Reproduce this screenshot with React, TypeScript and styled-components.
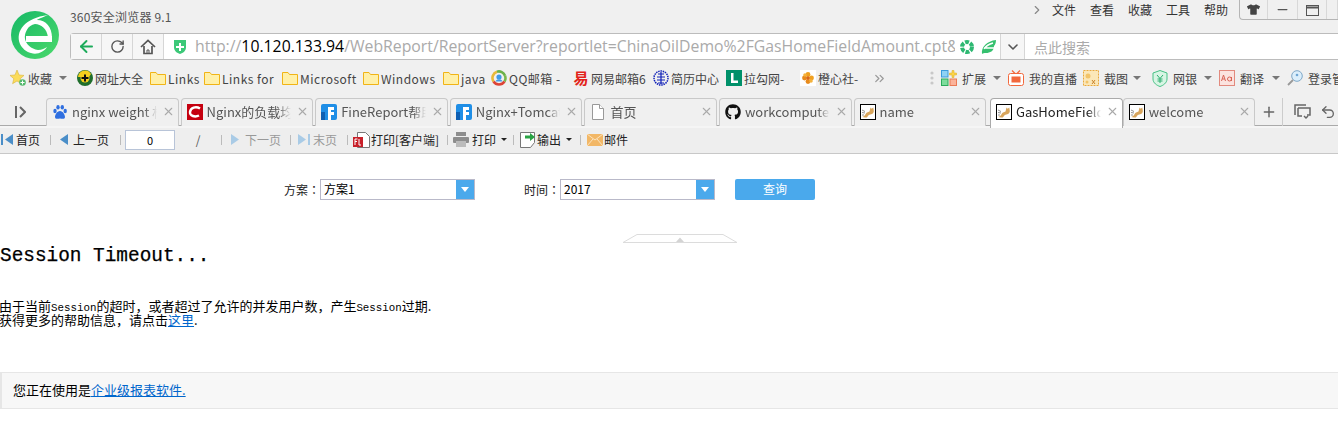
import React from "react"
import styled, { createGlobalStyle } from "styled-components"
import { ArrowLeft, RotateCw, ChevronDown, ChevronRight, ChevronsRight, Plus, X, Undo2, Minus } from "lucide-react"
import { FaGithub, FaTshirt } from "react-icons/fa"

const CJK = `"Noto Sans CJK SC", "Noto Sans", sans-serif`

const GlobalStyle = createGlobalStyle`
  html, body {
    margin: 0;
    padding: 0;
    background: #fff;
    overflow: hidden;
  }
  * { box-sizing: border-box; }
`

/* ---------- small drawn icons ---------- */

const Logo = () => (
  <svg width="48" height="48" viewBox="0 0 48 48">
    <defs>
      <linearGradient id="lg" x1="0" y1="0" x2="1" y2="1">
        <stop offset="0" stopColor="#16b866" />
        <stop offset="1" stopColor="#4cd96c" />
      </linearGradient>
    </defs>
    <circle cx="24" cy="24" r="24" fill="url(#lg)" />
    <path
      d="M9 33C4 20 14 7 37 4C30 7 27 8 26 9C35 9 41 16 41 27L37 26C36 18 30 13 24 13C17 14 13 22 14 28C15 33 20 38 27 39C31 39 34 37 36 36C33 41 26 44 20 42C15 41 11 37 9 33Z"
      fill="#fff"
    />
    <rect x="15" y="25" width="26" height="6" fill="#fff" />
  </svg>
)

const Shield = ({ color = "#3cc878" }: { color?: string }) => (
  <svg width="14" height="16" viewBox="0 0 14 16">
    <path d="M1 1h12v7c0 4-3 6-6 7-3-1-6-3-6-7z" fill={color} />
    <path d="M6 4h2v3h3v2H8v3H6V9H3V7h3z" fill="#fff" />
  </svg>
)

const Home = () => (
  <svg width="16" height="16" viewBox="0 0 16 16" fill="none" stroke="#555" strokeWidth="1.7">
    <path d="M1 8l7-6.5L15 8" />
    <path d="M4 7v7.500h8V7" />
    <path d="M7 15v-4h2v4" strokeWidth="1" />
  </svg>
)

const Ring = () => (
  <svg width="14" height="14" viewBox="0 0 14 14" fill="none" stroke="#2eb872" strokeWidth="4" strokeDasharray="4 1.240">
    <circle cx="7" cy="7" r="5" />
  </svg>
)

const Leaf = () => (
  <svg width="15" height="14" viewBox="0 0 15 14">
    <path d="M1 14C0 7 6 1 15 0c0 3-1 5-2 6 0 5-4 7-8 7-2 0-3 0-4 1z" fill="#36c06f" />
    <path d="M3 9c2-3 5-5 9-6M3 8h10" stroke="#fff" strokeWidth="1.300" fill="none" />
  </svg>
)

const Star = () => (
  <svg width="16" height="16" viewBox="0 0 16 16">
    <path d="M7 0l2 5 5 .4-3.800 3.300 1.200 5L7 11l-4.400 2.700 1.200-5L0 5.400 5 5z" fill="#fbdc5a" stroke="#d9b43c" strokeWidth=".6" />
    <circle cx="12.500" cy="12.500" r="3.300" fill="#55b96e" />
    <path d="M12 10.500h1v1.500h1.500v1H13v1.500h-1V13h-1.500v-1H12z" fill="#fff" />
  </svg>
)

const Nav = () => (
  <svg width="16" height="16" viewBox="0 0 16 16">
    <circle cx="8" cy="8" r="8" fill="#1f6e2c" />
    <path d="M1 7a7 7 0 0 1 13-3l-2 3z" fill="#f5cf1e" />
    <circle cx="8" cy="8" r="4.500" fill="#f5cf1e" />
    <path d="M7 4.500h2V7h2.500v2H9v2.500H7V9H4.500V7H7z" fill="#111" />
  </svg>
)

const Folder = () => (
  <svg width="16" height="14" viewBox="0 0 16 14">
    <path d="M.5 1.500h5.500l1.500 2h8v10H.5z" fill="#fff0a8" stroke="#f1b416" />
  </svg>
)

const QQMail = () => (
  <svg width="16" height="16" viewBox="0 0 16 16" fill="none" strokeWidth="2.600">
    <path d="M2.500 11.500A6.600 6.600 0 0 1 6 1.700" stroke="#e8b93a" />
    <path d="M6 1.700a6.600 6.600 0 0 1 8 4" stroke="#6cb24a" />
    <path d="M14 5.700a6.600 6.600 0 0 1-.5 5.800" stroke="#78b84c" />
    <path d="M13.500 11.500a6.600 6.600 0 0 1-11 0" stroke="#dc4436" />
    <circle cx="8" cy="7" r="2.600" fill="#3d9be9" stroke="none" />
    <path d="M4.500 11.500c1-3 6-3 7 0z" fill="#3d9be9" stroke="none" />
  </svg>
)

const Netease = () => <NeteaseMark>易</NeteaseMark>

const Resume = () => (
  <svg width="16" height="16" viewBox="0 0 16 16" fill="none" stroke="#1020b8">
    <circle cx="8" cy="8" r="7" strokeWidth="1.500" strokeDasharray="1.500 .8" />
    <path d="M5 4h6M4 7h8M4 10h8M5 13h6M8 2v12" strokeWidth="1.200" />
  </svg>
)

const Lagou = () => (
  <svg width="16" height="16" viewBox="0 0 16 16">
    <rect width="16" height="16" fill="#00916a" />
    <path d="M5 3h2.500v7.500H12V13H5z" fill="#fff" />
  </svg>
)

const Flower = () => (
  <svg width="16" height="16" viewBox="0 0 16 16">
    <rect width="16" height="16" fill="#fff" />
    <circle cx="8" cy="4.500" r="2.400" fill="#f0a020" />
    <circle cx="4.500" cy="8" r="2.400" fill="#e88a1c" />
    <circle cx="11.500" cy="8" r="2.400" fill="#f0a020" />
    <circle cx="8" cy="11.500" r="2.400" fill="#e88a1c" />
    <circle cx="5" cy="5" r="1.800" fill="#f4b23c" />
    <circle cx="11" cy="11" r="1.800" fill="#f4b23c" />
    <circle cx="8" cy="8" r="1.800" fill="#d9661a" />
  </svg>
)

const Grip = () => (
  <svg width="4" height="14" viewBox="0 0 4 14" fill="#c8c8c8">
    <circle cx="2" cy="2" r="1.600" />
    <circle cx="2" cy="7" r="1.600" />
    <circle cx="2" cy="12" r="1.600" />
  </svg>
)

const Extend = () => (
  <svg width="16" height="16" viewBox="0 0 16 16">
    <rect x=".5" y=".5" width="6.500" height="6.500" fill="#8fd2f5" stroke="#3a9bdc" />
    <rect x=".5" y="9" width="6.500" height="6.500" fill="#7edc9c" stroke="#2cab5c" />
    <rect x="9" y="9" width="6.500" height="6.500" fill="#fbb39a" stroke="#ea7a55" />
    <path d="M11 .5h2V3h2.500v2H13v2.500h-2V5H8.500V3H11z" fill="#fbd34b" stroke="#dba81c" strokeWidth=".5" />
  </svg>
)

const Tv = () => (
  <svg width="16" height="16" viewBox="0 0 16 16">
    <path d="M4 .5l3 3M12 .5l-3 3" stroke="#f2683c" strokeWidth="1.200" />
    <rect x=".5" y="3.500" width="15" height="12" rx="2" fill="#fff" stroke="#f2683c" />
    <rect x="3.500" y="6.500" width="9" height="6" fill="#f2683c" />
  </svg>
)

const Shot = () => (
  <svg width="16" height="16" viewBox="0 0 16 16">
    <rect x=".5" y=".5" width="15" height="15" fill="#fbe7b8" stroke="#eaa93a" strokeDasharray="2 1" />
    <circle cx="5" cy="6" r="2.500" fill="#f2c46a" />
    <path d="M9 10l3 4M12 10l-3 4" stroke="#c9822a" />
    <circle cx="4" cy="12" r="1.500" fill="#f2c46a" />
  </svg>
)

const Bank = () => (
  <svg width="16" height="17" viewBox="0 0 16 17">
    <path d="M8 .5l7 2.500v6c0 4-4 6.500-7 7.500-3-1-7-3.500-7-7.500V3z" fill="#d8f5e4" stroke="#46c184" />
    <path d="M5 5l3 3.500L11 5M8 8.500V13M5.500 9h5M5.500 11h5" stroke="#2eaf70" fill="none" />
  </svg>
)

const Translate = () => (
  <svg width="16" height="16" viewBox="0 0 16 16">
    <rect x=".5" y=".5" width="15" height="15" fill="#fbe3df" stroke="#e28a7e" />
    <path d="M2.500 11l2-6 2 6M3.300 9h2.500" stroke="#d86456" fill="none" />
    <circle cx="10.500" cy="9" r="2" stroke="#d86456" fill="none" />
    <path d="M12.500 7v4" stroke="#d86456" />
  </svg>
)

const Login = () => (
  <svg width="16" height="16" viewBox="0 0 16 16">
    <circle cx="10" cy="6" r="5.300" fill="#dbeefb" stroke="#7fa8c8" />
    <circle cx="10" cy="5" r="1.300" fill="#6ea6d4" />
    <path d="M6 10l-5 5" stroke="#999" strokeWidth="1.800" />
  </svg>
)

const Paw = () => (
  <svg width="16" height="16" viewBox="0 0 16 16" fill="#2f6fe0">
    <ellipse cx="3" cy="7" rx="1.700" ry="2.200" />
    <ellipse cx="6" cy="3.300" rx="1.700" ry="2.300" />
    <ellipse cx="10.300" cy="3.300" rx="1.700" ry="2.300" />
    <ellipse cx="13.200" cy="7" rx="1.700" ry="2.200" />
    <path d="M8 7c3 0 5 4 5 6s-2 2-5 1.500C5 15 3 15 3 13s2-6 5-6z" />
  </svg>
)

const CsdnMark = () => (
  <svg width="16" height="16" viewBox="0 0 16 16">
    <rect width="16" height="16" fill="#c5000f" />
    <path d="M13 4.500C9 2 3.500 3.500 3 8c-.4 4 5 5.500 9 3.500" fill="none" stroke="#fff" strokeWidth="2.400" />
  </svg>
)

const FineMark = () => (
  <svg width="16" height="16" viewBox="0 0 16 16">
    <rect width="16" height="16" rx="2" fill="#1f8ee6" />
    <path d="M7 3h6v3H10v2h3v3h-3v5H7z" fill="#fff" />
    <rect x="0" y="8" width="4" height="8" fill="#0e5fb2" />
  </svg>
)

const Page = () => (
  <svg width="14" height="16" viewBox="0 0 14 16" fill="#fff" stroke="#999">
    <path d="M1.500 .5h7l4 4v11h-11z" />
    <path d="M8.500 .5v4h4" />
  </svg>
)

const Tomcat = () => (
  <svg width="16" height="16" viewBox="0 0 16 16">
    <rect x=".5" y=".5" width="15" height="15" fill="#fff" stroke="#000" />
    <path d="M2 13c3-.5 3-3 5-4.500l2.500-1 1-4 1.200 1.200 1.600-1.200.5 3.500c0 3-3 3.500-5 4l-2 2.500H5z" fill="#d8a55c" />
    <path d="M2 6l3 1.500M2 8.500l3 .5M2 11h2" stroke="#777" strokeWidth=".8" />
  </svg>
)

const TabsCopy = () => (
  <svg width="17" height="16" viewBox="0 0 17 16" fill="none" stroke="#666" strokeWidth="1.500">
    <path d="M1 11V1h11" />
    <path d="M4 4h12v7h-3M4 4v8h4" />
    <path d="M10 12l2 2 2-2" />
  </svg>
)

const FirstArrow = ({ c = "#4a8ec8" }: { c?: string }) => (
  <svg width="13" height="13" viewBox="0 0 13 13" fill={c}>
    <rect y="1" width="2" height="11" />
    <path d="M4 6.500L12 1v11z" />
  </svg>
)

const PrevArrow = () => (
  <svg width="9" height="13" viewBox="0 0 9 13" fill="#4a8ec8">
    <path d="M0 6.500L8 1v11z" />
  </svg>
)

const NextArrow = () => (
  <svg width="9" height="13" viewBox="0 0 9 13" fill="#a9cbe6">
    <path d="M8 6.500L0 1v11z" />
  </svg>
)

const LastArrow = () => (
  <svg width="13" height="13" viewBox="0 0 13 13" fill="#a9cbe6">
    <path d="M0 1v11l8-5.500z" />
    <rect x="10" y="1" width="2" height="11" />
  </svg>
)

const ClientPrint = () => (
  <svg width="17" height="16" viewBox="0 0 17 16">
    <path d="M4.500 .5h8l4 4v11h-12z" fill="#fff" stroke="#777" />
    <rect x="0" y="5" width="10" height="10" fill="#c8202a" />
    <path d="M2 7h2.500M2 7v6M2 9.500h2M6 7v6h2" stroke="#fff" fill="none" />
  </svg>
)

const Printer = () => (
  <svg width="16" height="15" viewBox="0 0 16 15" fill="#8d8d8d">
    <rect x="3" y="0" width="10" height="4" />
    <rect x="0" y="5" width="16" height="6" rx="1" />
    <rect x="3" y="9" width="10" height="6" fill="#bbb" />
  </svg>
)

const ExportIcon = () => (
  <svg width="16" height="16" viewBox="0 0 16 16">
    <path d="M.5 .5h14v10l-4 5H.5z" fill="#fff" stroke="#777" />
    <path d="M5 3.500h5V1l5 4-5 4V6.500H5z" fill="#2aa345" />
  </svg>
)

const Mail = () => (
  <svg width="16" height="12" viewBox="0 0 16 12">
    <rect width="16" height="12" fill="#f2b766" />
    <path d="M0 0l8 6 8-6M0 12l6-7M16 12l-6-7" stroke="#fbe3bf" fill="none" />
  </svg>
)

const RestoreIcon = () => (
  <svg width="13" height="12" viewBox="0 0 13 12" fill="none" stroke="#555">
    <rect x=".5" y="1.500" width="12" height="10" />
    <path d="M.5 3.500h12" strokeWidth="2" />
  </svg>
)

const ToggleIcon = () => (
  <svg width="11" height="12" viewBox="0 0 11 12" fill="none" stroke="#666" strokeWidth="2">
    <path d="M1 0v12" />
    <path d="M5 1l5 5-5 5" />
  </svg>
)

/* ---------- data ---------- */

type Mark = { icon: React.ReactNode; label: string; w: number; caret?: number; latin?: boolean }

const leftMarks: Mark[] = [
  { icon: <Star />, label: "收藏", w: 67, caret: 10 },
  { icon: <Nav />, label: "网址大全", w: 73 },
  { icon: <Folder />, label: "Links", w: 54, latin: true },
  { icon: <Folder />, label: "Links for", w: 78, latin: true },
  { icon: <Folder />, label: "Microsoft", w: 81, latin: true },
  { icon: <Folder />, label: "Windows", w: 80, latin: true },
  { icon: <Folder />, label: "java", w: 48, latin: true },
  { icon: <QQMail />, label: "QQ邮箱 -", w: 82, latin: true },
  { icon: <Netease />, label: "网易邮箱6", w: 80 },
  { icon: <Resume />, label: "简历中心", w: 73 },
  { icon: <Lagou />, label: "拉勾网-", w: 74 },
  { icon: <Flower />, label: "橙心社-", w: 72 },
]

const rightMarks: Mark[] = [
  { icon: <Extend />, label: "扩展", w: 67, caret: 7 },
  { icon: <Tv />, label: "我的直播", w: 75 },
  { icon: <Shot />, label: "截图", w: 69, caret: 11 },
  { icon: <Bank />, label: "网银", w: 67, caret: 7 },
  { icon: <Translate />, label: "翻译", w: 68, caret: 7 },
  { icon: <Login />, label: "登录管家", w: 80 },
]

const tabs = [
  { icon: <Paw />, title: "nginx weight 权重" },
  { icon: <CsdnMark />, title: "Nginx的负载均衡" },
  { icon: <FineMark />, title: "FineReport帮助" },
  { icon: <FineMark />, title: "Nginx+Tomcat" },
  { icon: <Page />, title: "首页" },
  { icon: <FaGithub size={16} color="#111" />, title: "workcomputer" },
  { icon: <Tomcat />, title: "name" },
  { icon: <Tomcat />, title: "GasHomeFieldAmount", active: true },
  { icon: <Tomcat />, title: "welcome" },
]

/* ---------- page ---------- */

const App = () => {
  return (
    <Screen>
      <GlobalStyle />
      <Chrome>
        <Header>
          <LogoSlot>
            <Logo />
          </LogoSlot>
          <HeaderMain>
            <TitleRow>
              <AppTitle>360安全浏览器 9.1</AppTitle>
              <Menu>
                <ChevronRight size={14} color="#888" />
                <MenuItems>
                  {["文件", "查看", "收藏", "工具", "帮助"].map(m => (
                    <MenuItem key={m}>{m}</MenuItem>
                  ))}
                </MenuItems>
                <WindowBox>
                  <WindowButton $w={28}>
                    <FaTshirt size={13} color="#444" />
                  </WindowButton>
                  <WindowButton $w={30}>
                    <Minus size={15} color="#555" />
                  </WindowButton>
                  <WindowButton $w={29}>
                    <RestoreIcon />
                  </WindowButton>
                  <WindowButton $w={11} />
                </WindowBox>
              </Menu>
            </TitleRow>
            <AddressBar>
              <NavButton>
                <ArrowLeft size={19} color="#1dab5b" strokeWidth={2.4} />
              </NavButton>
              <NavButton>
                <RotateCw size={15} color="#555" strokeWidth={2.2} />
              </NavButton>
              <NavButton>
                <Home />
              </NavButton>
              <ShieldSlot>
                <Shield />
              </ShieldSlot>
              <UrlText>
                http://<b>10.120.133.94</b>/WebReport/ReportServer?reportlet=ChinaOilDemo%2FGasHomeFieldAmount.cpt&amp;
              </UrlText>
              <UrlIcons>
                <Ring />
                <Leaf />
              </UrlIcons>
              <DropButton>
                <ChevronDown size={16} color="#555" strokeWidth={2.4} />
              </DropButton>
              <SearchBox>点此搜索</SearchBox>
            </AddressBar>
          </HeaderMain>
        </Header>

        <Bookmarks>
          {leftMarks.map(m => (
            <BookmarkItem key={m.label} $w={m.w}>
              <IconSlot>{m.icon}</IconSlot>
              <MarkLabel $latin={m.latin}>{m.label}</MarkLabel>
              {m.caret ? <Caret $right={m.caret} /> : null}
            </BookmarkItem>
          ))}
          <MoreSlot>
            <ChevronsRight size={15} color="#999" />
          </MoreSlot>
          <GripSlot>
            <Grip />
          </GripSlot>
          {rightMarks.map(m => (
            <BookmarkItem key={m.label} $w={m.w}>
              <IconSlot>{m.icon}</IconSlot>
              <RightLabel>{m.label}</RightLabel>
              {m.caret ? <Caret $right={m.caret} /> : null}
            </BookmarkItem>
          ))}
        </Bookmarks>

        <TabStrip>
          <TabToggle>
            <ToggleIcon />
          </TabToggle>
          {tabs.map(t => (
            <Tab key={t.title} $active={!!t.active}>
              <IconSlot>{t.icon}</IconSlot>
              <TabTitle $active={!!t.active}>{t.title}</TabTitle>
              <X size={13} color="#aaa" strokeWidth={2} />
            </Tab>
          ))}
          <NewTab>
            <Plus size={16} color="#666" strokeWidth={2.2} />
          </NewTab>
          <StripTools>
            <TabsCopy />
            <Undo2 size={16} color="#666" strokeWidth={2} />
          </StripTools>
        </TabStrip>
      </Chrome>

      <ReportBar>
        <ToolItem $w={50}>
          <FirstArrow />
          <ToolText>首页</ToolText>
        </ToolItem>
        <ToolSep />
        <ToolItem $w={69} $pad={9}>
          <PrevArrow />
          <ToolText $gap={4}>上一页</ToolText>
        </ToolItem>
        <ToolSep />
        <PageInput>0</PageInput>
        <PageSlash>/</PageSlash>
        <ToolSep />
        <ToolItem $w={68} $pad={9}>
          <NextArrow />
          <ToolText $off $gap={5}>下一页</ToolText>
        </ToolItem>
        <ToolSep />
        <ToolItem $w={56} $pad={7}>
          <LastArrow />
          <ToolText $off>末页</ToolText>
        </ToolItem>
        <ToolSep />
        <ToolItem $w={99} $pad={5}>
          <ClientPrint />
          <ToolText $gap={1}>打印[客户端]</ToolText>
        </ToolItem>
        <ToolSep />
        <ToolItem $w={65} $pad={5}>
          <Printer />
          <ToolText $gap={3}>打印</ToolText>
          <SmallCaret />
        </ToolItem>
        <ToolSep />
        <ToolItem $w={66} $pad={6}>
          <ExportIcon />
          <ToolText $gap={1}>输出</ToolText>
          <SmallCaret />
        </ToolItem>
        <ToolSep />
        <ToolItem $w={60} $pad={6}>
          <Mail />
          <ToolText $gap={1}>邮件</ToolText>
        </ToolItem>
      </ReportBar>

      <Content>
        <FilterRow>
          <FilterLabel>方案：</FilterLabel>
          <SelectBox>
            <SelectValue>方案1</SelectValue>
            <SelectArrow />
          </SelectBox>
          <FilterLabel $gap={49}>时间：</FilterLabel>
          <SelectBox>
            <SelectValue>2017</SelectValue>
            <SelectArrow />
          </SelectBox>
          <QueryButton>查询</QueryButton>
        </FilterRow>

        <CollapseHandle>
          <svg width="114" height="9" viewBox="0 0 114 9">
            <path d="M0 8.500h114M0 8.500L14 .5h86l14 8" fill="#fff" stroke="#dcdcdc" />
            <path d="M53 8l4-4.500L61 8z" fill="#d4d4d4" />
          </svg>
        </CollapseHandle>

        <Heading>Session Timeout...</Heading>

        <Message>
          <div>
            由于当前<MonoWord>Session</MonoWord>的超时，或者超过了允许的并发用户数，产生<MonoWord>Session</MonoWord>过期.
          </div>
          <div>
            获得更多的帮助信息，请点击<TextLink href="#">这里</TextLink>.
          </div>
        </Message>

        <Notice>
          您正在使用是<TextLink href="#">企业级报表软件.</TextLink>
        </Notice>
      </Content>
    </Screen>
  )
}

/* ---------- styles ---------- */

const Screen = styled.div`
  width: 1338px;
  height: 421px;
  overflow: hidden;
  background: #fff;
  font-family: ${CJK};
  color: #000;
`
const Chrome = styled.div`
  background: #f0f0f0;
`
const Header = styled.div`
  display: flex;
  height: 64px;
`
const LogoSlot = styled.div`
  width: 70px;
  padding: 11px 0 0 11px;
  flex: none;
`
const HeaderMain = styled.div`
  flex: 1;
  min-width: 0;
  display: flex;
  flex-direction: column;
`
const TitleRow = styled.div`
  height: 33px;
  display: flex;
  align-items: flex-start;
  justify-content: space-between;
`
const AppTitle = styled.div`
  font-size: 12px;
  line-height: 14px;
  margin-top: 10px;
  letter-spacing: 0.2px;
  color: #555;
`
const Menu = styled.div`
  display: flex;
  align-items: flex-start;
  padding-top: 3px;
`
const MenuItems = styled.div`
  display: flex;
  gap: 14px;
  margin: 0 11px 0 8px;
`
const MenuItem = styled.span`
  font-size: 12px;
  line-height: 14px;
  color: #333;
`
const WindowBox = styled.div`
  display: flex;
  height: 20px;
  margin-top: -3px;
  border-left: 1px solid #b5b5b5;
  border-bottom: 1px solid #b5b5b5;
  border-bottom-left-radius: 4px;
`
const WindowButton = styled.div<{ $w: number }>`
  width: ${p => p.$w}px;
  display: flex;
  align-items: center;
  justify-content: center;
  border-right: 1px solid #d8d8d8;
`
const AddressBar = styled.div`
  height: 27px;
  display: flex;
  align-items: center;
  background: #fff;
  border: 1px solid #bcbcbc;
  border-right: none;
  border-top-left-radius: 4px;
  border-bottom-left-radius: 4px;
`
const NavButton = styled.div`
  width: 31px;
  height: 25px;
  flex: none;
  display: flex;
  align-items: center;
  justify-content: center;
  background: #f6f6f6;
  border-right: 1px solid #d6d6d6;
`
const ShieldSlot = styled.div`
  width: 31px;
  flex: none;
  display: flex;
  justify-content: center;
`
const UrlText = styled.div`
  width: 760px;
  flex: none;
  overflow: hidden;
  white-space: nowrap;
  font-family: "Open Sans", sans-serif;
  font-size: 15.800px;
  line-height: 25px;
  color: #aaa;
  b {
    font-weight: 400;
    color: #000;
  }
`
const UrlIcons = styled.div`
  width: 45px;
  flex: none;
  display: flex;
  align-items: center;
  gap: 7px;
  padding-left: 5px;
`
const DropButton = styled.div`
  width: 25px;
  height: 25px;
  flex: none;
  display: flex;
  align-items: center;
  justify-content: center;
  background: #f6f6f6;
  border-left: 1px solid #d6d6d6;
  border-right: 1px solid #d6d6d6;
`
const SearchBox = styled.div`
  padding-left: 9px;
  font-size: 14px;
  color: #aaa;
`
const Bookmarks = styled.div`
  height: 33px;
  padding: 0 0 5px 10px;
  display: flex;
  align-items: center;
  overflow: hidden;
`
const BookmarkItem = styled.div<{ $w: number }>`
  width: ${p => p.$w}px;
  flex: none;
  display: flex;
  align-items: center;
  white-space: nowrap;
`
const IconSlot = styled.span`
  width: 16px;
  height: 16px;
  flex: none;
  display: flex;
  align-items: center;
  justify-content: center;
`
const NeteaseMark = styled.span`
  font-size: 15px;
  line-height: 16px;
  font-weight: 700;
  color: #e2231a;
`
const MarkLabel = styled.span<{ $latin?: boolean }>`
  margin-left: 2px;
  font-size: 12px;
  letter-spacing: ${p => (p.$latin ? "0.5px" : "0")};
  color: #444;
`
const RightLabel = styled(MarkLabel)`
  margin-left: 5px;
`
const Caret = styled.i<{ $right: number }>`
  margin-left: auto;
  margin-right: ${p => p.$right}px;
  border-left: 4px solid transparent;
  border-right: 4px solid transparent;
  border-top: 4px solid #777;
`
const MoreSlot = styled.div`
  width: 58px;
  flex: none;
  display: flex;
`
const GripSlot = styled.div`
  width: 11px;
  flex: none;
  display: flex;
`
const TabStrip = styled.div`
  height: 31px;
  padding-top: 1px;
  display: flex;
  align-items: flex-start;
  background: linear-gradient(#f0f0f0 28px, #aaa 28px, #aaa 29px, #f5f5f5 29px);
`
const TabToggle = styled.div`
  width: 46px;
  height: 28px;
  flex: none;
  padding-left: 15px;
  display: flex;
  align-items: center;
`
const Tab = styled.div<{ $active: boolean }>`
  width: 132.600px;
  height: ${p => (p.$active ? 30 : 28)}px;
  flex: none;
  margin: ${p => (p.$active ? "0 0.2px 0 1.8px" : "0 2px 0 0")};
  padding: ${p => (p.$active ? "0 3px 4px 5px" : "0 3px 2px 5px")};
  display: flex;
  align-items: center;
  background: ${p => (p.$active ? "#fff" : "#f0f0f0")};
  border: 1px solid ${p => (p.$active ? "#aaa" : "#c9c9c9")};
  border-bottom: none;
  border-radius: 4px 4px 0 0;
`
const TabTitle = styled.span<{ $active: boolean }>`
  flex: 1;
  min-width: 0;
  margin: 0 5px 0 4px;
  overflow: hidden;
  white-space: nowrap;
  font-size: 13px;
  color: ${p => (p.$active ? "#222" : "#555")};
  -webkit-mask-image: linear-gradient(to right, #000 85%, transparent);
  mask-image: linear-gradient(to right, #000 85%, transparent);
`
const NewTab = styled.div`
  width: 28px;
  height: 28px;
  flex: none;
  display: flex;
  align-items: center;
  justify-content: center;
  border-right: 1px solid #ccc;
  margin-left: -2px;
`
const StripTools = styled.div`
  height: 28px;
  display: flex;
  align-items: center;
  gap: 9px;
  padding-left: 11px;
`
const ReportBar = styled.div`
  height: 26px;
  padding-bottom: 2px;
  display: flex;
  align-items: center;
  background: #eee;
  border-bottom: 1px solid #c8c8c8;
`
const ToolItem = styled.div<{ $w: number; $pad?: number }>`
  width: ${p => p.$w}px;
  flex: none;
  display: flex;
  align-items: center;
  padding-left: ${p => p.$pad ?? 1}px;
`
const ToolText = styled.span<{ $off?: boolean; $gap?: number }>`
  margin-left: ${p => p.$gap ?? 2}px;
  font-size: 12px;
  white-space: nowrap;
  color: ${p => (p.$off ? "#999" : "#222")};
`
const ToolSep = styled.i`
  width: 1px;
  height: 10px;
  flex: none;
  background: #bbb;
`
const SmallCaret = styled.i`
  margin-left: 5px;
  border-left: 3px solid transparent;
  border-right: 3px solid transparent;
  border-top: 3px solid #222;
`
const PageInput = styled.div`
  width: 50px;
  height: 20px;
  margin-left: 4px;
  flex: none;
  background: #fff;
  border: 1px solid #b8c4d8;
  font-size: 11px;
  line-height: 18px;
  text-align: center;
`
const PageSlash = styled.div`
  width: 46px;
  flex: none;
  text-align: center;
  font-size: 12px;
  color: #555;
`
const Content = styled.div`
  background: #fff;
`
const FilterRow = styled.div`
  height: 21px;
  margin-top: 25px;
  padding-left: 284px;
  display: flex;
  align-items: center;
`
const FilterLabel = styled.span<{ $gap?: number }>`
  width: 36px;
  flex: none;
  margin-left: ${p => p.$gap ?? 0}px;
  padding-bottom: 1px;
  font-family: "Noto Sans CJK TC", sans-serif;
  font-size: 12px;
  color: #222;
`
const SelectBox = styled.div`
  width: 155px;
  height: 21px;
  flex: none;
  display: flex;
  border: 1px solid #b9b9c9;
`
const SelectValue = styled.div`
  flex: 1;
  padding-left: 3px;
  font-size: 12px;
  line-height: 18px;
`
const SelectArrow = styled.div`
  width: 18px;
  display: flex;
  align-items: center;
  justify-content: center;
  background: #4aa9ec;
  &::after {
    content: "";
    border-left: 4px solid transparent;
    border-right: 4px solid transparent;
    border-top: 5px solid #fff;
  }
`
const QueryButton = styled.div`
  width: 80px;
  height: 21px;
  margin-left: 20px;
  border-radius: 2px;
  background: #4aa9ec;
  color: #fff;
  font-size: 12px;
  line-height: 20px;
  text-align: center;
`
const CollapseHandle = styled.div`
  height: 9px;
  margin: 34px 0 0 623px;
  display: flex;
`
const Heading = styled.h1`
  margin: 1px 0 0;
  height: 24px;
  font-family: "Liberation Mono", monospace;
  font-size: 19.400px;
  line-height: 24px;
  font-weight: 400;
  -webkit-text-stroke: 0.25px #000;
`
const Message = styled.div`
  margin-top: 31px;
  margin-left: -1px;
  font-size: 13px;
  line-height: 14px;
`
const MonoWord = styled.span`
  font-family: "Liberation Mono", monospace;
  font-size: 10.800px;
  line-height: 0;
`
const TextLink = styled.a`
  color: #0066cc;
  text-decoration: underline;
`
const Notice = styled.div`
  height: 37px;
  margin-top: 45px;
  padding-left: 11px;
  background: #f7f7f7;
  border: 1px solid #e6e6e6;
  border-left-width: 2px;
  border-right: none;
  font-size: 13px;
  line-height: 33px;
`

export default React.memo(App)
